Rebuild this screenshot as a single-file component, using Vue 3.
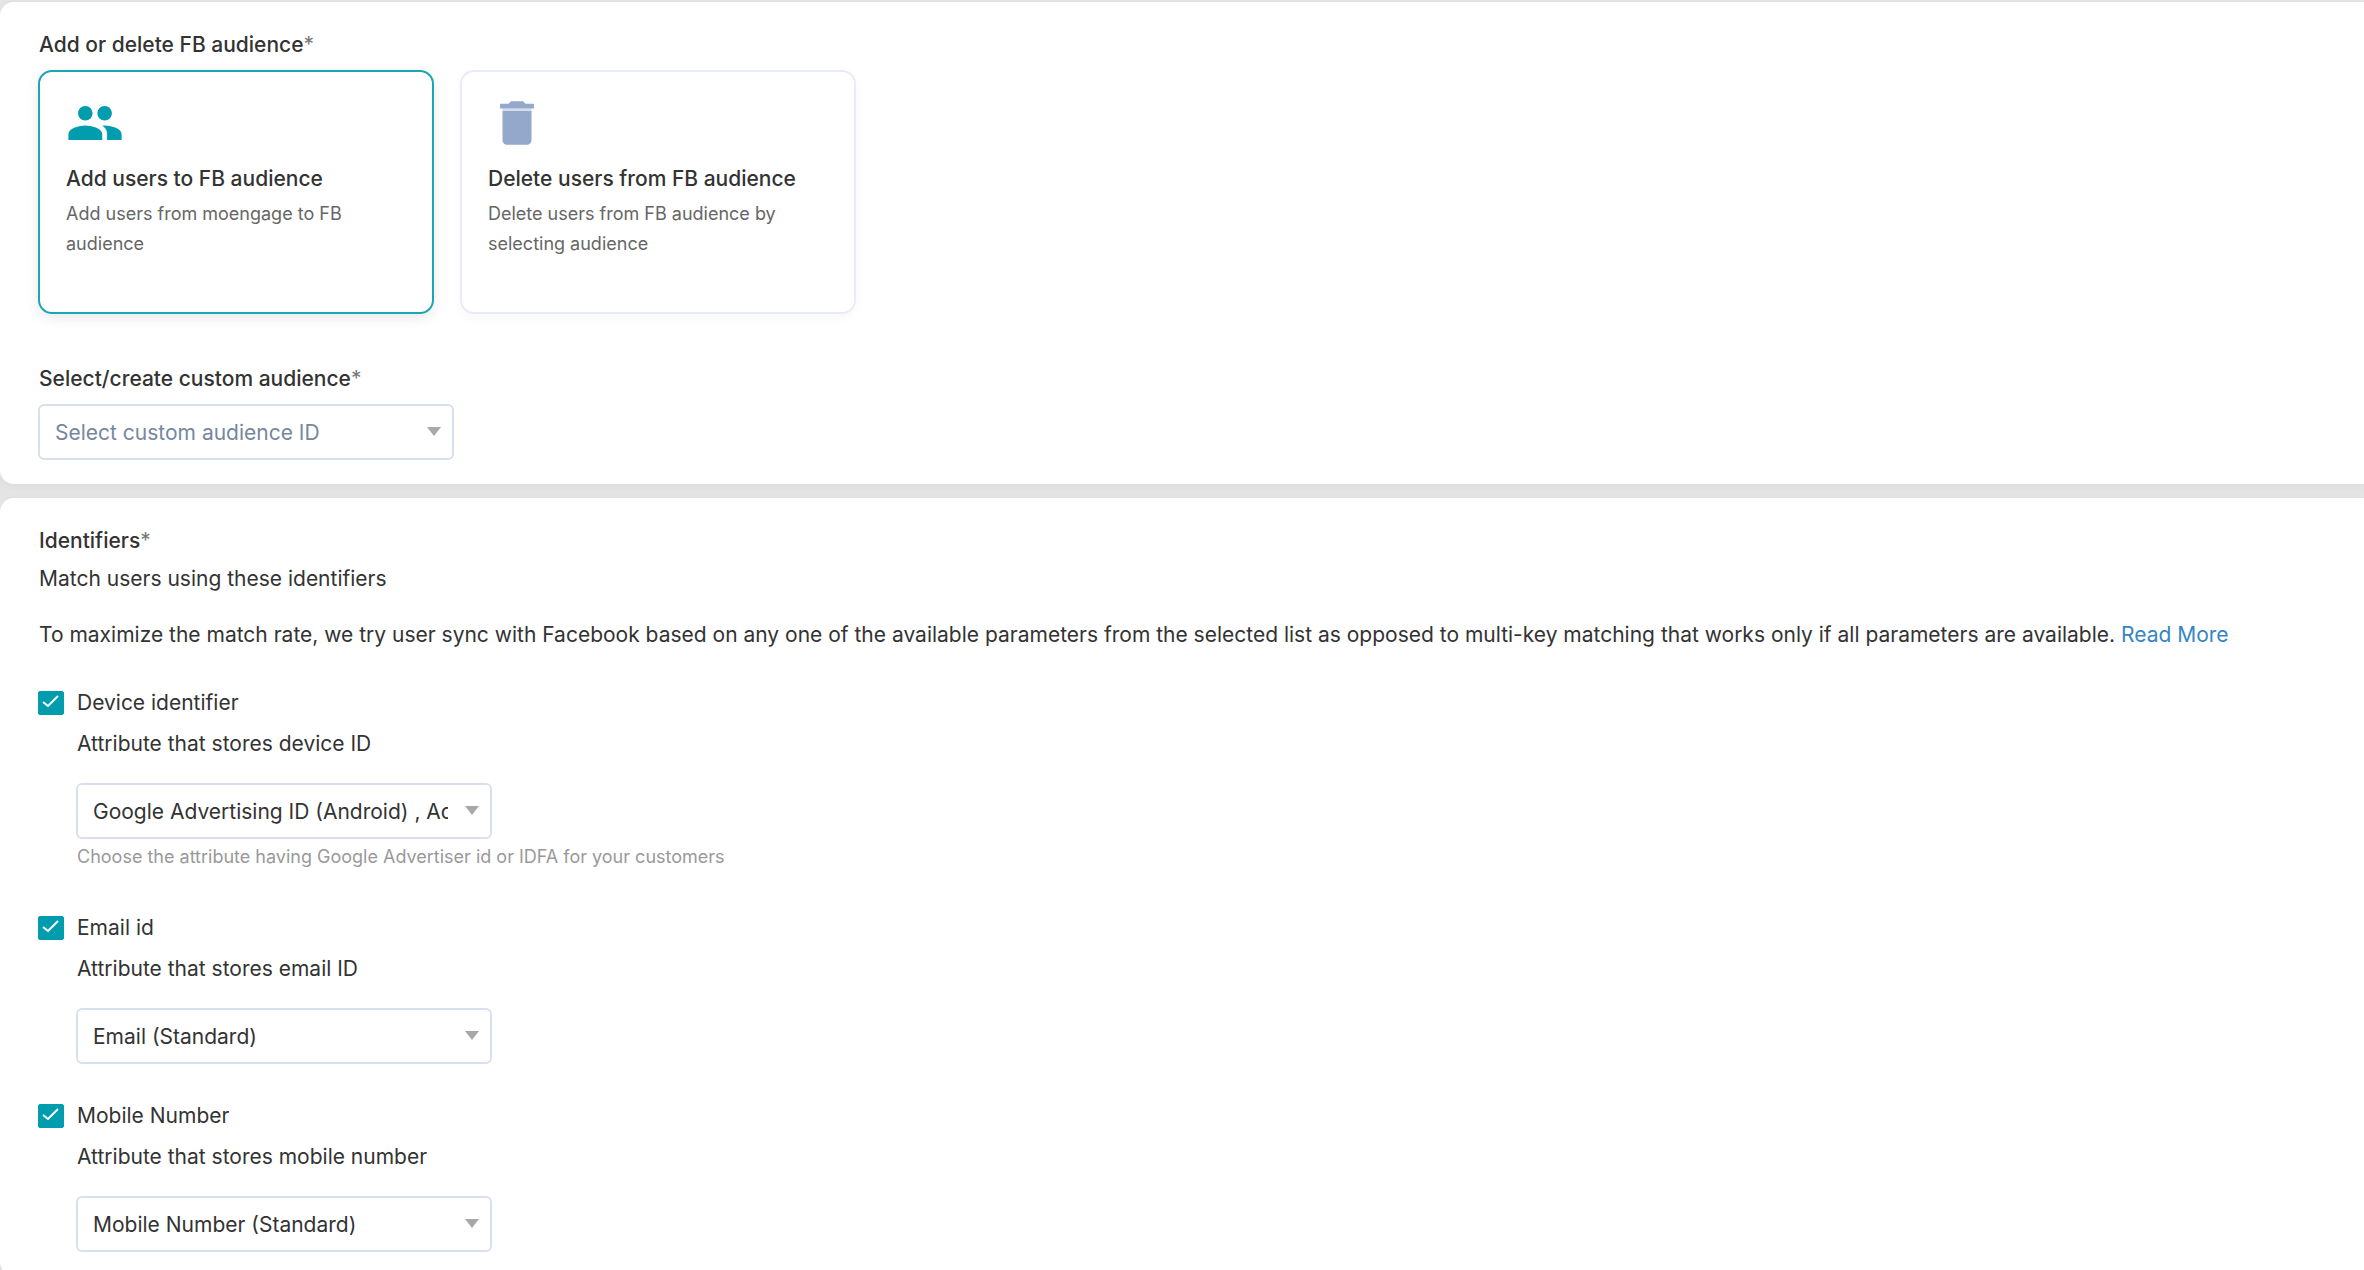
<script setup>
import { ref } from 'vue'

const action = ref('add')
const audience = ref('')

const actions = [
  {
    id: 'add',
    title: 'Add users to FB audience',
    text: 'Add users from moengage to FB audience'
  },
  {
    id: 'delete',
    title: 'Delete users from FB audience',
    text: 'Delete users from FB audience by selecting audience'
  }
]

const identifiers = ref([
  {
    id: 'device',
    name: 'Device identifier',
    label: 'Attribute that stores device ID',
    value: 'Google Advertising ID (Android) , Advertising Identifier (iOS)',
    help: 'Choose the attribute having Google Advertiser id or IDFA for your customers',
    checked: true
  },
  {
    id: 'email',
    name: 'Email id',
    label: 'Attribute that stores email ID',
    value: 'Email (Standard)',
    checked: true
  },
  {
    id: 'mobile',
    name: 'Mobile Number',
    label: 'Attribute that stores mobile number',
    value: 'Mobile Number (Standard)',
    checked: true
  }
])
</script>

<template>
  <main class="page">
    <section class="panel">
      <h2 class="title">Add or delete FB audience<span class="star">*</span></h2>
      <div class="cards">
        <button
          v-for="item in actions"
          :key="item.id"
          type="button"
          class="card"
          :class="{ selected: action === item.id }"
          :aria-pressed="action === item.id"
          @click="action = item.id"
        >
          <svg v-if="item.id === 'add'" class="icon people" viewBox="0 0 24 24" aria-hidden="true">
            <path d="M16 11c1.66 0 2.99-1.34 2.99-3S17.66 5 16 5s-3 1.34-3 3 1.34 3 3 3zm-8 0c1.66 0 2.99-1.34 2.99-3S9.66 5 8 5 5 6.34 5 8s1.34 3 3 3zm0 2c-2.33 0-7 1.17-7 3.5V19h14v-2.5c0-2.33-4.67-3.5-7-3.5zm8 0c-.29 0-.62.02-.97.05 1.16.84 1.97 1.97 1.97 3.45V19h6v-2.5c0-2.33-4.67-3.5-7-3.5z" />
          </svg>
          <svg v-else class="icon trash" viewBox="0 0 24 24" aria-hidden="true">
            <path class="seam" d="M6 6h12v1H6z" />
            <path d="M6 19c0 1.1.9 2 2 2h8c1.1 0 2-.9 2-2V7H6v12zM19 4h-3.5l-1-1h-5l-1 1H5v2h14V4z" />
          </svg>
          <span class="card-title">{{ item.title }}</span>
          <span class="card-text">{{ item.text }}</span>
        </button>
      </div>

      <label class="title audience-label" for="audience">Select/create custom audience<span class="star">*</span></label>
      <div class="select">
        <select id="audience" v-model="audience" class="placeholder">
          <option value="">Select custom audience ID</option>
        </select>
        <svg class="arrow" viewBox="0 0 16 9" aria-hidden="true"><path d="M1 0h14L8 9z" /></svg>
      </div>
    </section>

    <section class="panel">
      <h2 class="title">Identifiers<span class="star">*</span></h2>
      <p class="subtitle">Match users using these identifiers</p>
      <p class="note">
        To maximize the match rate, we try user sync with Facebook based on any one of the available parameters from the selected list as opposed to multi-key matching that works only if all parameters are available.
        <a href="#">Read More</a>
      </p>

      <div class="identifiers">
        <div v-for="item in identifiers" :key="item.id" class="identifier">
          <div class="check-row">
            <span class="check">
              <input :id="item.id" v-model="item.checked" type="checkbox" />
              <svg v-if="item.checked" viewBox="0 0 26 24" aria-hidden="true"><path d="M5 11l5 4L20 5" /></svg>
            </span>
            <label :for="item.id">{{ item.name }}</label>
          </div>
          <div class="field">
            <label :for="item.id + '-attribute'">{{ item.label }}</label>
            <div class="select">
              <select :id="item.id + '-attribute'" v-model="item.value">
                <option>{{ item.value }}</option>
              </select>
              <svg class="arrow" viewBox="0 0 16 9" aria-hidden="true"><path d="M1 0h14L8 9z" /></svg>
            </div>
            <p v-if="item.help" class="help">{{ item.help }}</p>
          </div>
        </div>
      </div>
    </section>
  </main>
</template>

<style>
body {
  background: #e4e4e4;
}
</style>

<style scoped>
.page {
  box-sizing: border-box;
  height: 100vh;
  overflow: hidden;
  padding-top: 2px;
  background: #e4e4e4;
  color: #333;
  font-family: Inter, "Liberation Sans", sans-serif;
  font-size: 21px;
  line-height: 30px;
}
.panel {
  padding: 28px 38px 24px;
  border-radius: 14px 0 0 14px;
  background: #fff;
  box-shadow: 0 2px 8px rgba(0, 0, 0, 0.04);
}
.panel + .panel {
  margin-top: 14px;
}
.title {
  display: block;
  margin: 0;
  padding-left: 1px;
  font-size: 21px;
  font-weight: 500;
}
.star {
  color: #777;
  font-weight: 400;
}
.cards {
  display: flex;
  flex-wrap: wrap;
  gap: 26px;
  margin-top: 10px;
}
.card {
  box-sizing: border-box;
  display: flex;
  flex-direction: column;
  align-items: flex-start;
  width: 396px;
  min-height: 244px;
  padding: 22px 26px;
  border: 2px solid #e9ecf5;
  border-radius: 14px;
  background: #fff;
  box-shadow: 0 4px 12px rgba(0, 0, 0, 0.03);
  color: inherit;
  font: inherit;
  text-align: left;
  cursor: pointer;
}
.card.selected {
  border-color: #1ba6b4;
  box-shadow: 0 4px 14px rgba(0, 0, 0, 0.09);
}
.icon {
  width: 58px;
  height: 58px;
}
.people {
  fill: #019dae;
}
.trash {
  fill: #94a8cb;
}
.seam {
  fill: #d3dceb;
}
.card-title {
  margin-top: 12px;
  font-weight: 500;
}
.card-text {
  margin-top: 5px;
  color: #666;
  font-size: 18px;
}
.audience-label {
  margin-top: 50px;
}
.select {
  position: relative;
  width: 416px;
  margin-top: 10px;
}
select {
  box-sizing: border-box;
  display: block;
  width: 100%;
  height: 56px;
  padding: 1px 42px 0 15px;
  border: 2px solid #d8dfee;
  border-radius: 6px;
  background: #fff;
  color: #333;
  font: inherit;
  appearance: none;
}
.placeholder {
  color: #76879c;
}
.arrow {
  position: absolute;
  top: 23px;
  right: 12px;
  width: 16px;
  height: 9px;
  fill: #a8a8a8;
  pointer-events: none;
}
.subtitle {
  margin: 8px 0 0;
  padding-left: 1px;
}
.note {
  margin: 26px 0 0;
  padding-left: 1px;
}
a {
  color: #3585c7;
  text-decoration: none;
}
.identifiers {
  display: flex;
  flex-direction: column;
  gap: 37px;
  margin-top: 38px;
}
.check-row {
  display: flex;
  align-items: center;
  gap: 13px;
}
.check {
  position: relative;
  display: flex;
}
.check input {
  width: 26px;
  height: 24px;
  margin: 0;
  border: 1px solid #019dae;
  border-radius: 2px;
  background: #fff;
  appearance: none;
}
.check input:checked {
  background: #019dae;
}
.check svg {
  position: absolute;
  inset: 0;
  fill: none;
  stroke: #fff;
  stroke-width: 2;
  pointer-events: none;
}
.field {
  margin-top: 11px;
  padding-left: 38px;
}
.field > label {
  display: block;
  padding-left: 1px;
}
.field .select {
  margin-top: 24px;
}
.help {
  margin: 3px 0 4px;
  padding-left: 1px;
  color: #999;
  font-size: 18px;
}
</style>
